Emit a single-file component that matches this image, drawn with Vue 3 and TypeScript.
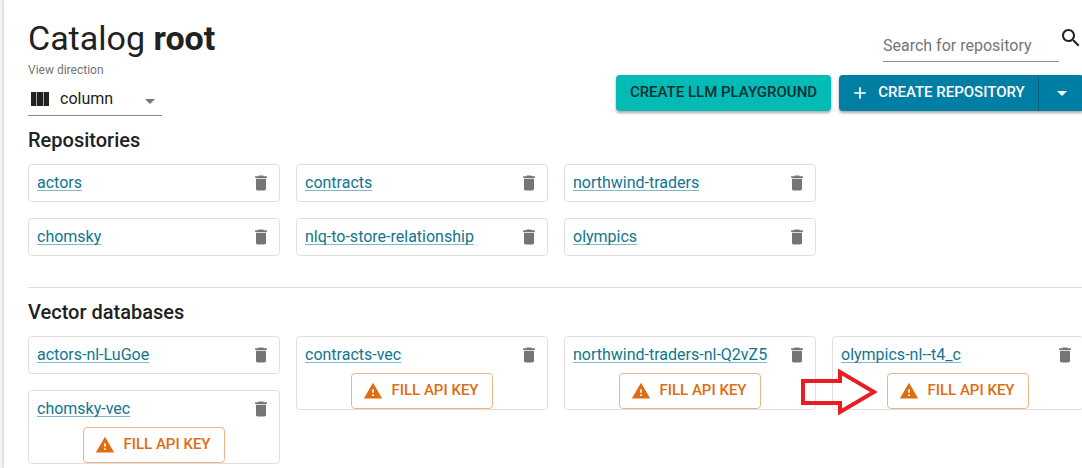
<script setup lang="ts">
import { ref } from 'vue'

interface CatalogItem {
  name: string
  needsKey?: boolean
  pointed?: boolean
}

interface Section {
  title: string
  columns: CatalogItem[][]
}

const direction = ref('column')
const query = ref('')

const sections: Section[] = [
  {
    title: 'Repositories',
    columns: [
      [{ name: 'actors' }, { name: 'chomsky' }],
      [{ name: 'contracts' }, { name: 'nlq-to-store-relationship' }],
      [{ name: 'northwind-traders' }, { name: 'olympics' }],
    ],
  },
  {
    title: 'Vector databases',
    columns: [
      [{ name: 'actors-nl-LuGoe' }, { name: 'chomsky-vec', needsKey: true }],
      [{ name: 'contracts-vec', needsKey: true }],
      [{ name: 'northwind-traders-nl-Q2vZ5', needsKey: true }],
      [{ name: 'olympics-nl--t4_c', needsKey: true, pointed: true }],
    ],
  },
]
</script>

<template>
  <main class="panel">
    <div class="content">
      <header class="header">
        <div class="heading">
          <h1 class="title">Catalog <b>root</b></h1>
          <label class="view-label" for="direction">View direction</label>
          <div class="view-field">
            <svg class="view-icon" viewBox="0 0 18 14" aria-hidden="true">
              <path d="M0 0h5.2v14H0zM5.8 0h6.4v14H5.8zM12.8 0H18v14h-5.2z" />
            </svg>
            <select id="direction" v-model="direction" class="view-select">
              <option value="column">column</option>
              <option value="row">row</option>
            </select>
            <svg class="caret view-caret" viewBox="0 0 10 5" aria-hidden="true">
              <path d="M0 0l5 5 5-5z" />
            </svg>
          </div>
        </div>

        <div class="tools">
          <form class="search" @submit.prevent>
            <input
              v-model="query"
              class="search-input"
              type="text"
              placeholder="Search for repository"
              aria-label="Search for repository"
            />
            <button class="search-button" type="submit" aria-label="Search">
              <svg viewBox="0 0 24 24" aria-hidden="true">
                <path
                  d="M15.5 14h-.79l-.28-.27C15.41 12.59 16 11.11 16 9.5 16 5.91 13.09 3 9.5 3S3 5.91 3 9.5 5.91 16 9.5 16c1.61 0 3.09-.59 4.23-1.57l.27.28v.79l5 4.99L20.49 19l-4.99-5zm-6 0C7.01 14 5 11.99 5 9.5S7.01 5 9.5 5 14 7.01 14 9.5 11.99 14 9.5 14z"
                />
              </svg>
            </button>
          </form>
          <div class="actions">
            <button class="btn playground" type="button">CREATE LLM PLAYGROUND</button>
            <div class="group">
              <button class="btn create" type="button">
                <svg class="plus" viewBox="0 0 20 20" aria-hidden="true">
                  <path d="M15.83 10.83h-5v5H9.17v-5h-5V9.17h5v-5h1.66v5h5z" />
                </svg>
                <span class="btn-text">CREATE REPOSITORY</span>
              </button>
              <button class="btn more" type="button" aria-label="More options">
                <svg class="caret" viewBox="0 0 10 5" aria-hidden="true">
                  <path d="M0 0l5 5 5-5z" />
                </svg>
              </button>
            </div>
          </div>
        </div>
      </header>

      <section v-for="section in sections" :key="section.title" class="section">
        <h2 class="section-title">{{ section.title }}</h2>
        <div class="grid">
          <div v-for="(column, i) in section.columns" :key="i" class="column">
            <article v-for="item in column" :key="item.name" class="card">
              <div class="card-row">
                <a class="link" href="#">{{ item.name }}</a>
                <button class="delete" type="button" :aria-label="`Delete ${item.name}`">
                  <svg viewBox="0 0 20 20" aria-hidden="true">
                    <path
                      d="M5 15.83c0 .92.75 1.67 1.67 1.67h6.66c.92 0 1.67-.75 1.67-1.67v-10H5zM15.83 3.33h-2.91l-.84-.83H7.92l-.84.83H4.17V5h11.66z"
                    />
                  </svg>
                </button>
              </div>
              <div v-if="item.needsKey" class="key-wrap">
                <svg
                  v-if="item.pointed"
                  class="pointer"
                  viewBox="0 0 76 46"
                  aria-hidden="true"
                >
                  <path d="M2 12H39V3L73 23 39 43V34H2z" />
                </svg>
                <button class="key" type="button">
                  <svg viewBox="0 0 20 20" aria-hidden="true">
                    <path
                      d="M.83 17.5h18.34L10 1.67zM10.83 15H9.17v-1.67h1.66zm0-3.33H9.17V8.33h1.66z"
                    />
                  </svg>
                  <span class="btn-text">FILL API KEY</span>
                </button>
              </div>
            </article>
          </div>
        </div>
      </section>
    </div>
  </main>
</template>

<style>
body {
  margin: 0;
  background: #f4f4f4;
}
</style>

<style scoped>
* {
  box-sizing: border-box;
}

.panel {
  min-height: 100vh;
  max-height: 100vh;
  margin-left: 4px;
  padding: 17px 0 0 24px;
  overflow: hidden;
  background: #fff;
  box-shadow: 0 0 3px rgba(0, 0, 0, 0.25);
  color: #212121;
  font-family: Roboto, 'Liberation Sans', sans-serif;
  font-size: 16px;
  line-height: 24px;
}

.content {
  margin-right: -2px;
}

button,
input,
select {
  margin: 0;
  font: inherit;
}

button {
  padding: 0;
  border: 0;
  background: none;
  cursor: pointer;
}

svg {
  display: block;
  flex: none;
  fill: currentColor;
}

.header {
  display: flex;
  justify-content: space-between;
  gap: 24px;
}

.title {
  margin: 0 0 3px;
  font-size: 34px;
  font-weight: 400;
  line-height: 42px;
}

.title b {
  font-weight: 700;
}

.view-label {
  display: block;
  margin-bottom: 4px;
  color: #757575;
  font-size: 12px;
  line-height: 16px;
}

.view-field {
  position: relative;
  width: 134px;
}

.view-icon {
  position: absolute;
  top: 10px;
  left: 3px;
  width: 18px;
  height: 14px;
  pointer-events: none;
}

.view-select {
  display: block;
  width: 100%;
  height: 34px;
  padding: 0 24px 0 32px;
  border: 0;
  border-bottom: 1px solid #8c8c8c;
  border-radius: 0;
  outline: 0;
  appearance: none;
  background: transparent;
  color: inherit;
}

.caret {
  width: 10px;
  height: 5px;
}

.view-caret {
  position: absolute;
  top: 17px;
  right: 7px;
  color: #757575;
  pointer-events: none;
}

.tools {
  display: flex;
  flex-direction: column;
  align-items: flex-end;
  padding-top: 9px;
}

.search {
  display: flex;
  align-items: flex-start;
  margin-right: 1px;
}

.search-input {
  width: 176px;
  height: 36px;
  padding: 4px 0 0;
  border: 0;
  border-bottom: 1px solid #8c8c8c;
  outline: 0;
  background: transparent;
  color: inherit;
}

.search-input::placeholder {
  color: #757575;
  opacity: 1;
}

.search-button {
  width: 24px;
  height: 24px;
  color: #212121;
}

.actions {
  display: flex;
  gap: 8px;
  margin-top: 13px;
}

.btn {
  display: flex;
  align-items: center;
  justify-content: center;
  height: 36px;
  font-size: 15px;
  font-weight: 500;
  white-space: nowrap;
}

.btn-text {
  padding-bottom: 2px;
}

.playground,
.group {
  border-radius: 4px;
  box-shadow: 0 2px 3px rgba(0, 0, 0, 0.35);
}

.playground {
  width: 215px;
  padding-bottom: 2px;
  background: #02bbb5;
  color: #0b2f33;
}

.group {
  display: flex;
  overflow: hidden;
  background: #007ea4;
}

.create {
  gap: 8px;
  width: 200px;
  padding-right: 2px;
  border-right: 1px solid #046280;
  color: #fff;
}

.plus {
  width: 20px;
  height: 20px;
}

.more {
  width: 45px;
  color: #fff;
}

.section {
  padding-top: 8px;
}

.section + .section {
  margin-top: 31px;
  border-top: 1px solid #e0e0e0;
}

.section-title {
  margin: 0 0 8px;
  font-size: 20px;
  font-weight: 500;
  line-height: 32px;
}

.grid {
  display: grid;
  grid-template-columns: repeat(4, 1fr);
  gap: 16px;
}

.column {
  display: flex;
  flex-direction: column;
  gap: 16px;
}

.card {
  border: 1px solid #e0e0e0;
  border-radius: 4px;
}

.card-row {
  display: flex;
  align-items: center;
  justify-content: space-between;
  height: 36px;
  padding: 0 8px;
}

.link {
  color: #0f7690;
  text-decoration-color: #7fb9c8;
  text-decoration-line: underline;
  text-decoration-thickness: 1px;
  text-underline-offset: 2px;
  text-decoration-skip-ink: none;
  white-space: nowrap;
}

.delete,
.delete svg {
  width: 20px;
  height: 20px;
  color: #757575;
}

.key-wrap {
  position: relative;
  width: 142px;
  margin: 0 auto;
}

.key {
  display: flex;
  align-items: center;
  justify-content: center;
  gap: 8px;
  width: 100%;
  height: 36px;
  padding-right: 2px;
  border: 1px solid #efb588;
  border-radius: 4px;
  color: #e06c10;
  font-size: 15px;
  font-weight: 500;
  white-space: nowrap;
}

.key svg {
  width: 20px;
  height: 20px;
}

.pointer {
  position: absolute;
  top: -4px;
  right: calc(100% + 10px);
  width: 76px;
  height: 46px;
  fill: none;
  stroke: #ec1c24;
  stroke-width: 4px;
}
</style>
